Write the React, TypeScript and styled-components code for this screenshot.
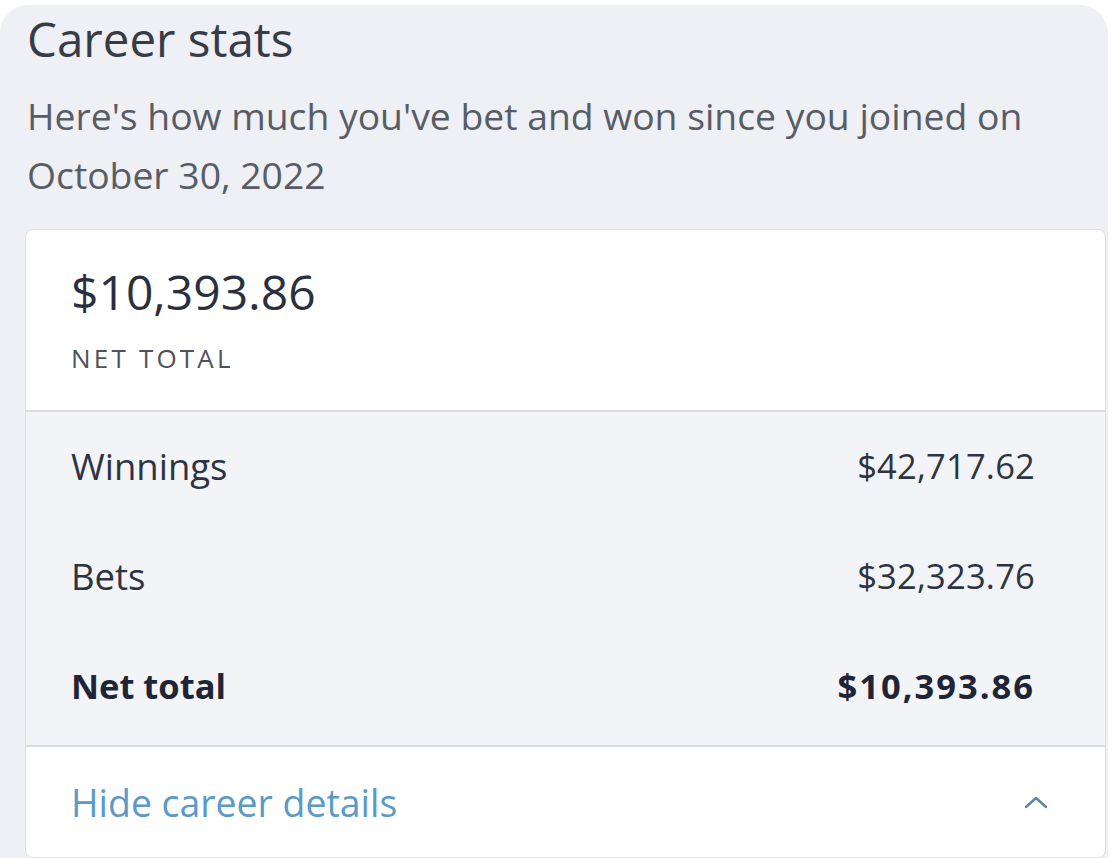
import React from "react";
import styled, { createGlobalStyle } from "styled-components";

const Global = createGlobalStyle`
  html, body { margin: 0; padding: 0; background: #ffffff; }
  body { font-family: "Open Sans", "Lato", sans-serif; -webkit-font-smoothing: antialiased; }
  * { box-sizing: border-box; }
`;

const Page = styled.div`
  width: 1112px;
  height: 858px;
  overflow: hidden;
  padding: 5px 4px 0 0;
`;

const Panel = styled.section`
  height: 100%;
  background: #eef0f5;
  border-radius: 28px 28px 0 0;
  padding: 0 2px 0 25px;
  display: flex;
  flex-direction: column;
`;

const Title = styled.h2`
  margin: 0;
  padding: 9px 0 0 2px;
  font-weight: 400;
  font-size: 47.5px;
  line-height: 50px;
  color: #363b46;
`;

const Subtitle = styled.p`
  margin: 0;
  padding: 22px 0 0 2px;
  font-size: 37.3px;
  line-height: 59px;
  color: #585c65;
`;

const Card = styled.div`
  margin-top: 25px;
  background: #ffffff;
  border: 1px solid #dfe0e5;
  border-radius: 8px;
  overflow: hidden;
  flex: 1;
  display: flex;
  flex-direction: column;
`;

const Header = styled.div`
  height: 182px;
  padding: 36px 45px 0;
  display: flex;
  flex-direction: column;
  border-bottom: 2px solid #d9dbe0;
`;

const Amount = styled.div`
  font-size: 48px;
  line-height: 52px;
  color: #2b3041;
`;

const Caption = styled.div`
  margin-top: 22px;
  font-size: 26px;
  letter-spacing: 3.2px;
  color: #4e525b;
`;

const Stats = styled.div`
  background: #f3f4f8;
  padding: 0 70px 3px 45px;
  border-bottom: 2px solid #d9dbe0;
  display: flex;
  flex-direction: column;
`;

const Row = styled.div<{ $bold?: boolean }>`
  height: 110px;
  padding-bottom: 3px;
  display: flex;
  align-items: center;
  justify-content: space-between;
  font-weight: ${(p) => (p.$bold ? 700 : 400)};
  color: ${(p) => (p.$bold ? "#1f2536" : "#2e3342")};
`;

const Label = styled.span<{ $bold?: boolean }>`
  font-size: ${(p) => (p.$bold ? "34.5px" : "36.5px")};
`;

const Value = styled.span<{ $bold?: boolean }>`
  font-size: 34.5px;
  letter-spacing: ${(p) => (p.$bold ? "2px" : "0.2px")};
`;

const Footer = styled.div`
  flex: 1;
  padding: 0 56px 0 45px;
  display: flex;
  align-items: center;
  justify-content: space-between;
`;

const Link = styled.span`
  font-size: 37.4px;
  color: #5b9ac7;
`;

const Chevron = () => (
  <svg width="26" height="16" viewBox="0 0 26 16" fill="none">
    <path d="M3 13 L13 4 L23 13" stroke="#5a87a8" strokeWidth="2.4" strokeLinecap="round" strokeLinejoin="round" />
  </svg>
);

const rows = [
  { label: "Winnings", value: "$42,717.62" },
  { label: "Bets", value: "$32,323.76" },
  { label: "Net total", value: "$10,393.86", bold: true },
];

export default function App() {
  return (
    <Page>
      <Global />
      <Panel>
        <Title>Career stats</Title>
        <Subtitle>
          Here's how much you've bet and won since you joined on
          <br />
          October 30, 2022
        </Subtitle>
        <Card>
          <Header>
            <Amount>$10,393.86</Amount>
            <Caption>NET TOTAL</Caption>
          </Header>
          <Stats>
            {rows.map((r) => (
              <Row key={r.label} $bold={r.bold}>
                <Label $bold={r.bold}>{r.label}</Label>
                <Value $bold={r.bold}>{r.value}</Value>
              </Row>
            ))}
          </Stats>
          <Footer>
            <Link>Hide career details</Link>
            <Chevron />
          </Footer>
        </Card>
      </Panel>
    </Page>
  );
}
